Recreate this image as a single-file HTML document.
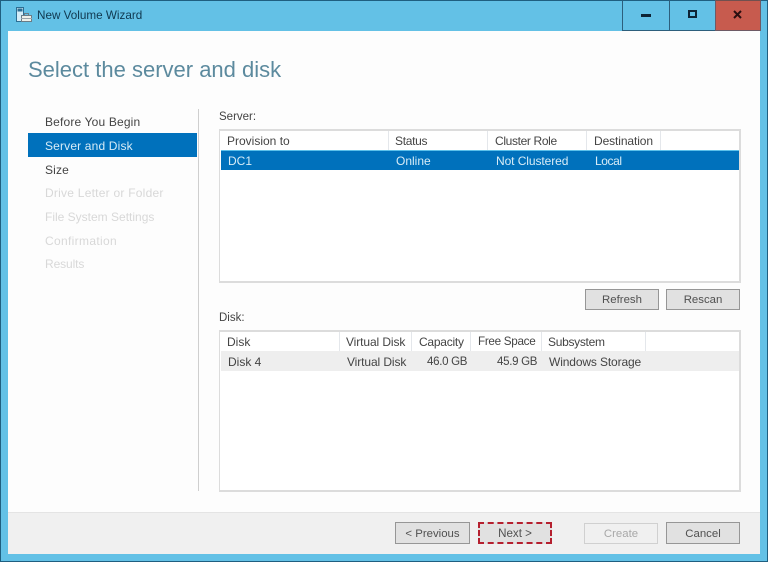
<!DOCTYPE html>
<html><head><meta charset="utf-8"><style>
html,body{margin:0;padding:0;background:#63c1e6}
#w{position:relative;width:768px;height:562px;overflow:hidden;background:#63c1e6;font-family:"Liberation Sans",sans-serif;font-size:12px;color:#444}
#w div{position:absolute;box-sizing:border-box}
.t{white-space:nowrap;line-height:16px;height:16px}
.m{letter-spacing:.16px}
.btn{background:#e1e1e1;border:1px solid #969696;text-align:center;line-height:21px;color:#505050;font-size:11.4px}
</style></head><body><div id="w">
<div style="left:0;top:0;width:768px;height:562px;border:1px solid #1f5f80"></div>
<div style="left:8px;top:31px;width:752px;height:523px;background:#fdfdfd"></div>
<div style="left:8px;top:512px;width:752px;height:42px;background:#f0f0f0;border-top:1px solid #e4e4e4"></div>

<svg style="position:absolute;left:15px;top:6px" width="18" height="18" viewBox="0 0 18 18">
<rect x="1.5" y="1.5" width="7" height="14" fill="#d4edf8" stroke="#2c6e93"/>
<rect x="2.5" y="2.5" width="5" height="3" fill="#2c6e93"/>
<rect x="6.5" y="9.5" width="10" height="6" fill="#eef0ea" stroke="#6b7c86"/>
<rect x="9.5" y="7.5" width="4" height="2" fill="none" stroke="#6b7c86"/>
<path d="M6 12.5h11" stroke="#9aa4aa"/>
</svg>
<div class="t" style="left:37px;top:8px;color:#10384f;font-size:11.7px">New Volume Wizard</div>

<div style="left:622px;top:0;width:139px;height:31px;border:1px solid #2d5f7c;border-top-color:#1f5f80;background:#63c1e6"></div>
<div style="left:669px;top:0;width:1px;height:30px;background:#2d5f7c"></div>
<div style="left:715px;top:0;width:46px;height:31px;background:#c75b4e;border:1px solid #6d5a66;border-top-color:#70504f"></div>
<div style="left:641px;top:14px;width:10px;height:3px;background:#0d2435"></div>
<div style="left:688px;top:10px;width:9px;height:8px;border:2px solid #0d2435"></div>
<svg style="position:absolute;left:732px;top:10px" width="11" height="9" viewBox="0 0 11 9"><path d="M2 1L9 8M9 1L2 8" stroke="#2a0f10" stroke-width="2"/></svg>

<div class="t" style="left:28px;top:56px;height:28px;line-height:28px;font-size:22px;color:#5c8a9e">Select the server and disk</div>

<div style="left:198px;top:109px;width:1px;height:382px;background:#cfcfcf"></div>
<div style="left:28px;top:133px;width:169px;height:24px;background:#0071bc"></div>
<div class="t m" style="left:45px;top:114px">Before You Begin</div>
<div class="t m" style="left:45px;top:138px;color:#d7ecf7">Server and Disk</div>
<div class="t m" style="left:45px;top:162px">Size</div>
<div class="t" style="left:45px;top:185px;color:#d8d8d8;letter-spacing:.24px">Drive Letter or Folder</div>
<div class="t" style="left:45px;top:209px;color:#d8d8d8">File System Settings</div>
<div class="t" style="left:45px;top:233px;color:#d8d8d8;letter-spacing:.33px">Confirmation</div>
<div class="t" style="left:45px;top:256px;color:#d8d8d8;letter-spacing:-.1px">Results</div>

<div class="t" style="left:219px;top:109px;font-size:11.5px">Server:</div>
<div style="left:219px;top:129px;width:522px;height:154px;background:#fff;border:1px solid #dcdcdc;border-width:2px 2px 2px 1px"></div>
<div style="left:388px;top:131px;width:1px;height:19px;background:#e4e7eb"></div>
<div style="left:487px;top:131px;width:1px;height:19px;background:#e4e7eb"></div>
<div style="left:586px;top:131px;width:1px;height:19px;background:#e4e7eb"></div>
<div style="left:660px;top:131px;width:1px;height:19px;background:#e4e7eb"></div>
<div class="t" style="left:227px;top:133px">Provision to</div>
<div class="t" style="left:395px;top:133px;letter-spacing:-.3px">Status</div>
<div class="t" style="left:495px;top:133px;letter-spacing:-.35px">Cluster Role</div>
<div class="t" style="left:594px;top:133px;letter-spacing:-.1px">Destination</div>
<div style="left:221px;top:150px;width:518px;height:20px;background:#0071bc;border-top:1px solid #5cc0ea"></div>
<div class="t" style="left:228px;top:153px;color:#d7ecf7">DC1</div>
<div class="t" style="left:396px;top:153px;color:#d7ecf7">Online</div>
<div class="t" style="left:496px;top:153px;color:#d7ecf7;letter-spacing:-.08px">Not Clustered</div>
<div class="t" style="left:595px;top:153px;color:#d7ecf7;letter-spacing:-.4px">Local</div>

<div class="btn" style="left:585px;top:289px;width:74px;height:21px">Refresh</div>
<div class="btn" style="left:666px;top:289px;width:74px;height:21px">Rescan</div>

<div class="t" style="left:219px;top:310px;font-size:11.5px">Disk:</div>
<div style="left:219px;top:330px;width:522px;height:162px;background:#fff;border:1px solid #dcdcdc;border-width:2px 2px 2px 1px"></div>
<div style="left:339px;top:332px;width:1px;height:19px;background:#e4e7eb"></div>
<div style="left:411px;top:332px;width:1px;height:19px;background:#e4e7eb"></div>
<div style="left:470px;top:332px;width:1px;height:19px;background:#e4e7eb"></div>
<div style="left:541px;top:332px;width:1px;height:19px;background:#e4e7eb"></div>
<div style="left:645px;top:332px;width:1px;height:19px;background:#e4e7eb"></div>
<div class="t" style="left:227px;top:334px">Disk</div>
<div class="t" style="left:346px;top:334px;letter-spacing:-.1px">Virtual Disk</div>
<div class="t" style="left:419px;top:334px;letter-spacing:-.25px">Capacity</div>
<div class="t" style="left:478px;top:334px;letter-spacing:-.3px;font-size:11.7px">Free Space</div>
<div class="t" style="left:548px;top:334px;letter-spacing:-.3px">Subsystem</div>
<div style="left:221px;top:351px;width:518px;height:20px;background:#eeeeee"></div>
<div class="t" style="left:228px;top:354px">Disk 4</div>
<div class="t" style="left:347px;top:354px;letter-spacing:-.1px">Virtual Disk</div>
<div class="t" style="left:427px;top:354px;letter-spacing:-.3px;font-size:11.5px">46.0 GB</div>
<div class="t" style="left:497px;top:354px;letter-spacing:-.3px;font-size:11.5px">45.9 GB</div>
<div class="t" style="left:549px;top:354px;letter-spacing:-.13px">Windows Storage</div>

<div class="btn" style="left:395px;top:522px;width:75px;height:22px;line-height:22px">&lt; Previous</div>
<div class="btn" style="left:478px;top:522px;width:74px;height:22px;border:2px dashed #b5202f;line-height:20px;font-size:11.6px">Next &gt;</div>
<div class="btn" style="left:584px;top:523px;width:74px;height:21px;background:#f0f0f0;border-color:#d0d0d0;color:#a8a8a8;line-height:20px">Create</div>
<div class="btn" style="left:666px;top:522px;width:74px;height:22px;line-height:22px">Cancel</div>
</div></body></html>
